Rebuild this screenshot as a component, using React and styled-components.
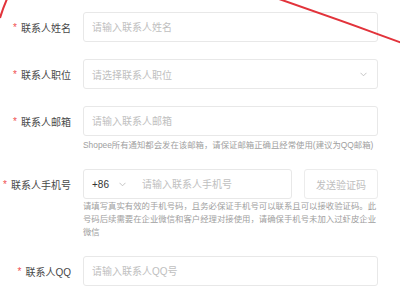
import React from "react";
import styled, { createGlobalStyle } from "styled-components";

const GlobalStyle = createGlobalStyle`
  html, body {
    margin: 0;
    padding: 0;
    background: #fff;
  }
  body {
    font-family: "Liberation Sans", "Noto Sans CJK SC", sans-serif;
  }
`;

const Page = styled.div`
  position: relative;
  width: 400px;
  height: 300px;
  overflow: hidden;
  background: #fff;
`;

const Form = styled.div`
  padding-top: 12px;
`;

const Item = styled.div`
  display: grid;
  grid-template-columns: 71px 295px;
  column-gap: 12px;
  margin-bottom: 17px;
`;

const Label = styled.div`
  height: 30px;
  display: flex;
  align-items: center;
  justify-content: flex-end;
  font-size: 10px;
  color: #484848;
  white-space: nowrap;

  &::before {
    content: "*";
    color: #f05050;
    margin-right: 4px;
    font-size: 10px;
  }
`;

const Box = styled.div`
  box-sizing: border-box;
  height: 30px;
  border: 1px solid #e8e8e8;
  border-radius: 3px;
  background: #fff;
  display: flex;
  align-items: center;
  padding: 0 8px;
  width: ${props => props.width || "100%"};
`;

const Input = styled.input`
  flex: 1;
  min-width: 0;
  border: none;
  outline: none;
  padding: 0;
  margin: 0;
  background: transparent;
  font-family: inherit;
  font-size: 10px;
  color: #333;

  &::placeholder {
    color: #c0c0c0;
  }
`;

const Placeholder = styled.span`
  flex: 1;
  font-size: 10px;
  color: #c0c0c0;
`;

const Code = styled.span`
  font-size: 10px;
  color: #333;
`;

const Chevron = styled.svg`
  width: 7px;
  height: 5px;
  flex: none;
  margin: ${props => props.margin || "0"};
`;

const Help = styled.div`
  margin-top: ${props => props.top || 0}px;
  font-size: 8.4px;
  line-height: 13px;
  color: #a0a0a0;
  width: 296px;
`;

const PhoneRow = styled.div`
  display: flex;
  gap: 12px;
`;

const CodeButton = styled.button`
  box-sizing: border-box;
  width: 74px;
  height: 30px;
  border: 1px solid #ececec;
  border-radius: 3px;
  background: #fff;
  font-family: inherit;
  font-size: 10px;
  color: #c0c0c0;
  padding: 0;
`;

const Mark = styled.svg`
  position: absolute;
  left: 0;
  top: 0;
  pointer-events: none;
`;

const Arrow = ({ margin }) => (
  <Chevron viewBox="0 0 7 5" margin={margin}>
    <path d="M0.5 0.8 L3.5 3.8 L6.5 0.8" fill="none" stroke="#bdbdbd" strokeWidth="0.9" />
  </Chevron>
);

const App = () => (
  <Page>
    <GlobalStyle />
    <Form>
      <Item>
        <Label>联系人姓名</Label>
        <Box>
          <Input placeholder="请输入联系人姓名" />
        </Box>
      </Item>
      <Item>
        <Label>联系人职位</Label>
        <Box>
          <Placeholder>请选择联系人职位</Placeholder>
          <Arrow margin="0 2px 0 0" />
        </Box>
      </Item>
      <Item>
        <Label>联系人邮箱</Label>
        <div>
          <Box>
            <Input placeholder="请输入联系人邮箱" />
          </Box>
          <Help top={3}>
            Shopee所有通知都会发在该邮箱，请保证邮箱正确且经常使用(建议为QQ邮箱)
          </Help>
        </div>
      </Item>
      <Item>
        <Label>联系人手机号</Label>
        <div>
          <PhoneRow>
            <Box width="209px">
              <Code>+86</Code>
              <Arrow margin="0 16px 0 10px" />
              <Input placeholder="请输入联系人手机号" />
            </Box>
            <CodeButton>发送验证码</CodeButton>
          </PhoneRow>
          <Help top={1}>
            请填写真实有效的手机号码，且务必保证手机号可以联系且可以接收验证码。此号码后续需要在企业微信和客户经理对接使用，请确保手机号未加入过虾皮企业微信
          </Help>
        </div>
      </Item>
      <Item>
        <Label>联系人QQ</Label>
        <Box>
          <Input placeholder="请输入联系人QQ号" />
        </Box>
      </Item>
    </Form>
    <Mark width="400" height="300" viewBox="0 0 400 300">
      <path d="M7 -1 Q3 8 0 18" fill="none" stroke="#e2333b" strokeWidth="2" />
      <path d="M279 -1 Q340 20 402 43" fill="none" stroke="#e2333b" strokeWidth="2" />
    </Mark>
  </Page>
);

export default App;
